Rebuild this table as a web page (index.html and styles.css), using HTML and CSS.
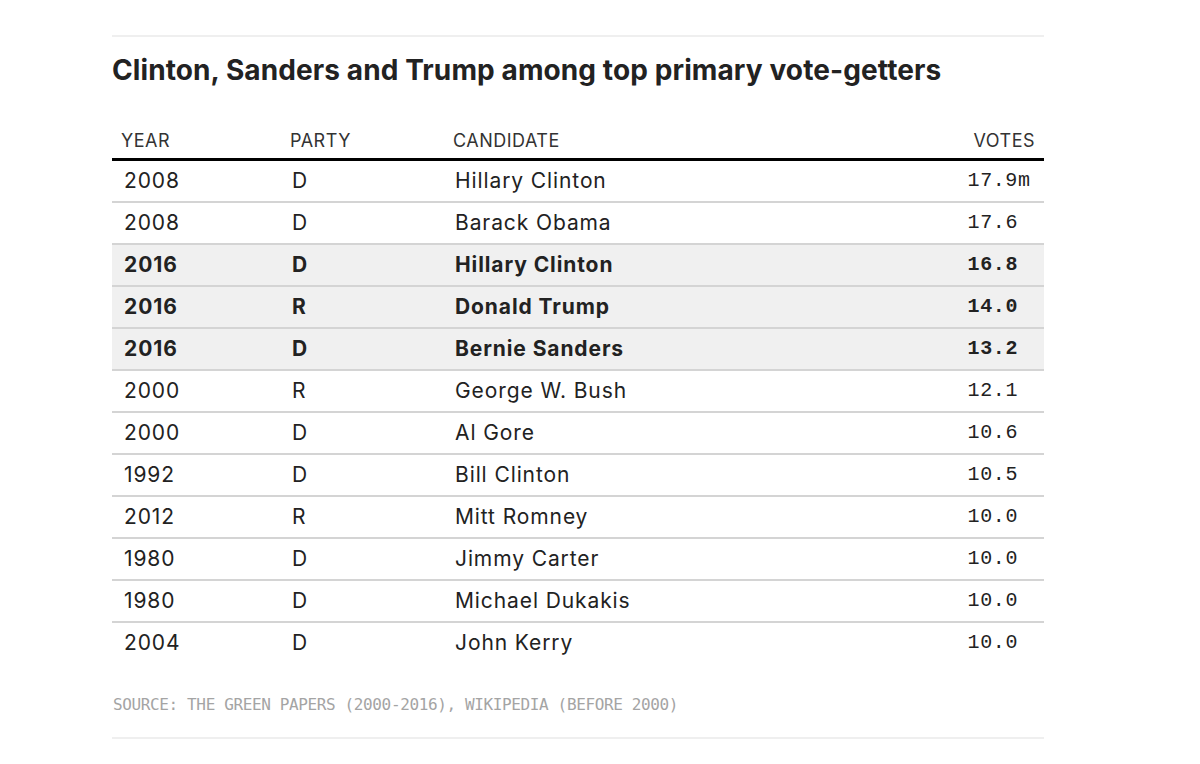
FILE: index.html
```html
<!DOCTYPE html>
<html>
<head>
<meta charset="utf-8">
<link rel="stylesheet" href="styles.css">
</head>
<body>
<div class="wrap">
  <div class="rule"></div>
  <h2 class="title">Clinton, Sanders and Trump among top primary vote-getters</h2>
  <table class="data">
    <colgroup>
      <col class="w-year"><col class="w-party"><col class="w-cand"><col class="w-votes">
    </colgroup>
    <thead>
      <tr><th class="c-year">YEAR</th><th class="c-party">PARTY</th><th class="c-cand">CANDIDATE</th><th class="c-votes">VOTES</th></tr>
    </thead>
    <tbody>
      <tr><td class="c-year">2008</td><td class="c-party">D</td><td class="c-cand">Hillary Clinton</td><td class="c-votes">17.9<span class="unit">m</span></td></tr>
      <tr><td class="c-year">2008</td><td class="c-party">D</td><td class="c-cand">Barack Obama</td><td class="c-votes">17.6</td></tr>
      <tr class="hl"><td class="c-year">2016</td><td class="c-party">D</td><td class="c-cand">Hillary Clinton</td><td class="c-votes">16.8</td></tr>
      <tr class="hl"><td class="c-year">2016</td><td class="c-party">R</td><td class="c-cand">Donald Trump</td><td class="c-votes">14.0</td></tr>
      <tr class="hl"><td class="c-year">2016</td><td class="c-party">D</td><td class="c-cand">Bernie Sanders</td><td class="c-votes">13.2</td></tr>
      <tr><td class="c-year">2000</td><td class="c-party">R</td><td class="c-cand">George W. Bush</td><td class="c-votes">12.1</td></tr>
      <tr><td class="c-year">2000</td><td class="c-party">D</td><td class="c-cand">Al Gore</td><td class="c-votes">10.6</td></tr>
      <tr><td class="c-year">1992</td><td class="c-party">D</td><td class="c-cand">Bill Clinton</td><td class="c-votes">10.5</td></tr>
      <tr><td class="c-year">2012</td><td class="c-party">R</td><td class="c-cand">Mitt Romney</td><td class="c-votes">10.0</td></tr>
      <tr><td class="c-year">1980</td><td class="c-party">D</td><td class="c-cand">Jimmy Carter</td><td class="c-votes">10.0</td></tr>
      <tr><td class="c-year">1980</td><td class="c-party">D</td><td class="c-cand">Michael Dukakis</td><td class="c-votes">10.0</td></tr>
      <tr class="last"><td class="c-year">2004</td><td class="c-party">D</td><td class="c-cand">John Kerry</td><td class="c-votes">10.0</td></tr>
    </tbody>
  </table>
  <p class="source">SOURCE: THE GREEN PAPERS (2000-2016), WIKIPEDIA (BEFORE 2000)</p>
  <div class="rule bottom"></div>
</div>
</body>
</html>
```

FILE: styles.css
```css
html, body {
  margin: 0;
  padding: 0;
  background: #fff;
}

body {
  font-family: Inter, "Liberation Sans", Arial, sans-serif;
  color: #222;
}

.wrap {
  width: 932px;
  margin-left: 112px;
  padding-top: 35px;
}

.rule {
  height: 2px;
  background: #efefef;
}

.title {
  margin: 16px 0 0 0;
  font-size: 28px;
  line-height: 34px;
  font-weight: 700;
  color: #222;
  letter-spacing: 0.1px;
}

.data {
  width: 100%;
  table-layout: fixed;
  border-collapse: collapse;
  margin-top: 34px;
}

.w-year { width: 169px; }
.w-party { width: 162px; }
.w-votes { width: 160px; }

.data th {
  height: 37px;
  box-sizing: border-box;
  padding: 10px 0 7px 0;
  line-height: 20px;
  font-size: 18px;
  font-weight: 400;
  letter-spacing: 0.5px;
  color: #333;
  text-align: left;
  border-bottom: 3px solid #000;
}

.data td {
  height: 40px;
  padding: 0;
  line-height: 20px;
  font-size: 21px;
  letter-spacing: 0.9px;
  color: #222;
  border-bottom: 2px solid #d4d4d4;
  vertical-align: middle;
}

.data tr.last td {
  border-bottom: none;
}

.data tr.hl td {
  background: #f0f0f0;
  font-weight: 700;
}

th.c-year { padding-left: 9px; }
td.c-year { padding-left: 12px; }
th.c-party { padding-left: 9px; }
td.c-party { padding-left: 11px; }
th.c-cand { padding-left: 10px; }
td.c-cand { padding-left: 12px; }
th.c-votes { text-align: right; padding-right: 9px; }

.data td.c-votes {
  text-align: right;
  padding-right: 26px;
  font-family: "Liberation Mono", "Courier New", monospace;
  font-size: 20px;
  letter-spacing: 0.6px;
}

.unit {
  margin-right: -12.6px;
}

.source {
  margin: 0;
  padding: 32px 0 22px 1px;
  font-family: "DejaVu Sans Mono", "Liberation Mono", monospace;
  font-size: 16px;
  line-height: 20px;
  letter-spacing: -0.37px;
  color: #a4a4a4;
}
```
